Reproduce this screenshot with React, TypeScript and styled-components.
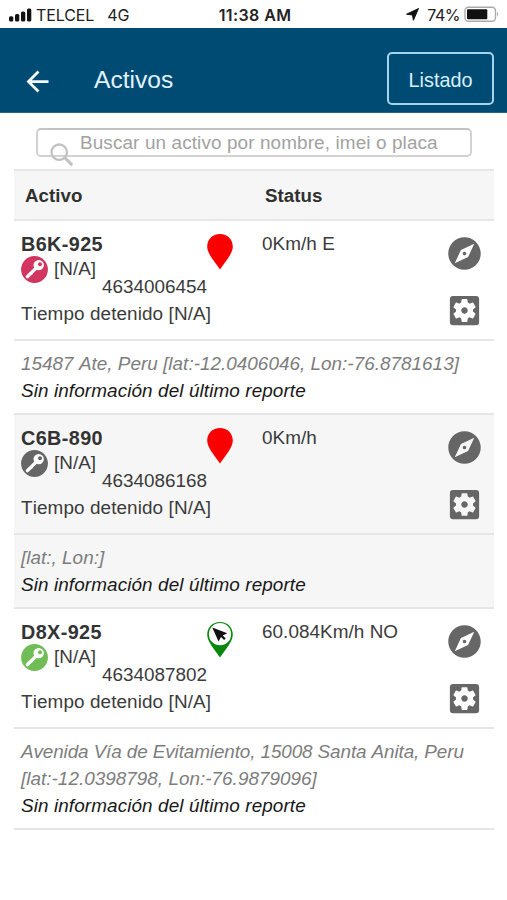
import React from "react";
import styled, { createGlobalStyle } from "styled-components";
import { MdArrowBack, MdExplore, MdSettingsApplications } from "react-icons/md";

const GlobalStyle = createGlobalStyle`
  * { box-sizing: border-box; }
  body { margin: 0; background: #fff; }
`;

const Screen = styled.div`
  width: 507px;
  height: 900px;
  overflow: hidden;
  background: #fff;
  color: #3b3b3b;
  font: 18.9px/27px "Liberation Sans", Arial, sans-serif;
  font-kerning: none;
`;

const StatusBar = styled.div`
  display: grid;
  grid-template-columns: 1fr auto 1fr;
  align-items: center;
  height: 28px;
  padding: 1px 7px 0 8px;
  color: #222;
  font: 16px/20px Inter, sans-serif;
`;

const StatusSide = styled.div<{ $end?: boolean }>`
  display: flex;
  align-items: center;
  justify-content: ${(p) => (p.$end ? "flex-end" : "flex-start")};
`;

const Carrier = styled.span`
  margin: 0 13px 0 4px;
  letter-spacing: -0.1px;
`;

const Network = styled.span`
  letter-spacing: -0.2px;
`;

const Clock = styled.span`
  padding-left: 2px;
  font-weight: 600;
  letter-spacing: 0.4px;
`;

const BatteryLevel = styled.span`
  margin: 0 4px 0 8px;
  letter-spacing: -0.5px;
`;

const AppBar = styled.header`
  display: flex;
  align-items: center;
  height: 85px;
  padding: 22px 13px 0 21px;
  background: #004b74;
  border-bottom: 1px solid #2b6384;
  color: #f4fbff;

  & > svg { flex: none; }
`;

const Title = styled.h1`
  flex: 1;
  margin: -2px 0 0 40px;
  color: #e0f3fe;
  font-size: 24.6px;
  font-weight: 400;
  line-height: 30px;
`;

const ListButton = styled.button`
  width: 107px;
  height: 53px;
  margin-top: -6px;
  padding: 4px 0 0;
  border: 2px solid #a5d3ec;
  border-radius: 5px;
  background: transparent;
  color: #d8f1ff;
  font: 19.8px/24px "Liberation Sans", Arial, sans-serif;
`;

const Content = styled.main`
  padding: 15px 13px 0 14px;
`;

const SearchBox = styled.div`
  position: relative;
  height: 29px;
  margin: 0 22px 12px;
  border: 2px solid #d2d2d2;
  border-top-color: #c2c2c2;
  border-radius: 5px;

  svg { position: absolute; left: 11px; top: 13px; }
`;

const SearchInput = styled.input`
  display: block;
  width: 100%;
  height: 25px;
  padding: 0 0 0 42px;
  border: 0;
  outline: 0;
  background: transparent;
  font: 18.9px/25px "Liberation Sans", Arial, sans-serif;
  letter-spacing: 0.12px;

  &::placeholder { color: #a2a2a2; opacity: 1; }
`;

const HeaderRow = styled.div`
  display: grid;
  grid-template-columns: 240px 1fr;
  height: 50px;
  padding: 11px 11px 0;
  border-top: 2px solid #e6e6e6;
  background: #f6f6f6;
  color: #303030;
  font-weight: 700;
  font-size: 18.7px;
  letter-spacing: 0.05px;
`;

const Record = styled.section<{ $shaded?: boolean }>`
  background: ${(p) => (p.$shaded ? "#f6f6f6" : "#fff")};
`;

const Summary = styled.div`
  display: grid;
  grid-template-columns: 186px 55px 1fr 39px;
  height: 120px;
  padding: 9px 10.5px 0 7px;
  border-top: 2px solid #e6e6e6;
`;

const AssetInfo = styled.div`
  display: flex;
  flex-direction: column;
  white-space: nowrap;
`;

const Plate = styled.strong`
  height: 26px;
  color: #333;
  font-size: 19.8px;
  line-height: 28px;
  letter-spacing: 0.4px;
`;

const KeyLine = styled.div`
  display: flex;
  align-items: center;
  gap: 6px;
  height: 27px;
`;

const KeyLabel = styled.span`
  margin-top: -2px;
`;

const Imei = styled.span`
  height: 21px;
  line-height: 8px;
  text-align: right;
`;

const Stopped = styled.span`
  line-height: 20px;
  letter-spacing: 0.1px;
`;

const PinCell = styled.div`
  padding-top: 3px;
`;

const Speed = styled.div`
  line-height: 28px;
  letter-spacing: 0.05px;
`;

const Actions = styled.div`
  display: flex;
  flex-direction: column;
  gap: 18px;
  padding-top: 4px;
  color: #666;

  svg { display: block; }
`;

const Details = styled.div`
  padding: 9px 7px 10.1px;
  border-top: 2px solid #e6e6e6;
  color: #7d7d7d;
  font-style: italic;
`;

const AddressLine = styled.div<{ $tight?: boolean }>`
  letter-spacing: ${(p) => (p.$tight ? "-0.11px" : "0.02px")};
`;

const Report = styled.div`
  height: 26px;
  color: #181818;
  letter-spacing: 0.1px;
`;

const TableEnd = styled.div`
  height: 2px;
  background: #e6e6e6;
`;

const SignalIcon = () => (
  <svg width="24" height="14" viewBox="0 0 24 14" fill="#111">
    <rect x="1" y="8.2" width="4.3" height="5.2" rx="1.5" />
    <rect x="7" y="6" width="4.3" height="7.4" rx="1.5" />
    <rect x="13" y="3.4" width="4.3" height="10" rx="1.5" />
    <rect x="19" y="0.6" width="4.3" height="12.8" rx="1.5" />
  </svg>
);

const LocationIcon = () => (
  <svg width="13" height="13" viewBox="0 0 13 13">
    <path d="M12.5.5 7.4 12.3 6.5 7 .6 6.2Z" fill="#111" stroke="#111" strokeLinejoin="round" />
  </svg>
);

const BatteryIcon = () => (
  <svg width="36" height="17" viewBox="0 0 36 17">
    <rect x="1" y="1.2" width="30.5" height="14" rx="3.5" fill="none" stroke="#aaa" strokeWidth="1.4" />
    <rect x="3" y="3.2" width="20.3" height="10" rx="1" fill="#111" />
    <path d="M33 6q2 2.2 0 4.5Z" fill="#999" />
  </svg>
);

const SearchIcon = () => (
  <svg width="26" height="26" viewBox="0 0 26 26" fill="none" stroke="#c1c1c1">
    <circle cx="10.2" cy="9.2" r="7.7" strokeWidth="2.3" />
    <path d="m15.8 14.8 7.4 7.3" strokeWidth="3" />
  </svg>
);

const KeyBadge = ({ color }: { color: string }) => (
  <svg width="27" height="27" viewBox="0 0 27 27">
    <circle cx="13.5" cy="13.5" r="13.4" fill={color} />
    <path d="m14.8 12.4-8.4 8.2" stroke="#fff" strokeWidth="3.4" strokeLinecap="round" />
    <path d="m10 17.6 1.2 1M7.4 20l.8.8" stroke="#fff" strokeWidth="1.8" />
    <circle cx="17.7" cy="9.1" r="5.2" fill="#fff" />
    <circle cx="19" cy="8.2" r="2" fill={color} />
  </svg>
);

const PinIcon = ({ moving }: { moving?: boolean }) => (
  <svg width="26" height="38" viewBox="1 0 26 38">
    <path
      d="M14 1C6.6 1 1.2 6.4 1.2 13.5 1.2 21 8.5 28 14 36.5 19.5 28 26.8 21 26.8 13.5 26.8 6.4 21.4 1 14 1Z"
      fill={moving ? "#07860c" : "#fb0000"}
    />
    {moving && (
      <>
        <circle cx="14" cy="13.2" r="11.1" fill="#fff" />
        <path d="m6.3 6.6 15 5.6-4.6 2.2 3 3-1.6 1.6-3.1-3.1-2.5 4.6Z" fill="#111" />
      </>
    )}
  </svg>
);

type AddressText = { text: string; tight?: boolean };

type Asset = {
  plate: string;
  imei: string;
  speed: string;
  keyColor: string;
  moving?: boolean;
  shaded?: boolean;
  address: AddressText[];
};

const assets: Asset[] = [
  {
    plate: "B6K-925",
    imei: "4634006454",
    speed: "0Km/h E",
    keyColor: "#d13560",
    address: [{ text: "15487 Ate, Peru [lat:-12.0406046, Lon:-76.8781613]" }],
  },
  {
    plate: "C6B-890",
    imei: "4634086168",
    speed: "0Km/h",
    keyColor: "#666",
    shaded: true,
    address: [{ text: "[lat:, Lon:]" }],
  },
  {
    plate: "D8X-925",
    imei: "4634087802",
    speed: "60.084Km/h NO",
    keyColor: "#70bd57",
    moving: true,
    address: [
      { text: "Avenida Vía de Evitamiento, 15008 Santa Anita, Peru", tight: true },
      { text: "[lat:-12.0398798, Lon:-76.9879096]" },
    ],
  },
];

const AssetRecord = ({ asset }: { asset: Asset }) => (
  <Record $shaded={asset.shaded}>
    <Summary>
      <AssetInfo>
        <Plate>{asset.plate}</Plate>
        <KeyLine>
          <KeyBadge color={asset.keyColor} />
          <KeyLabel>[N/A]</KeyLabel>
        </KeyLine>
        <Imei>{asset.imei}</Imei>
        <Stopped>Tiempo detenido [N/A]</Stopped>
      </AssetInfo>
      <PinCell>
        <PinIcon moving={asset.moving} />
      </PinCell>
      <Speed>{asset.speed}</Speed>
      <Actions>
        <MdExplore size={39} />
        <MdSettingsApplications size={39} />
      </Actions>
    </Summary>
    <Details>
      {asset.address.map((line) => (
        <AddressLine key={line.text} $tight={line.tight}>
          {line.text}
        </AddressLine>
      ))}
      <Report>Sin información del último reporte</Report>
    </Details>
  </Record>
);

export default function App() {
  return (
    <Screen>
      <GlobalStyle />
      <StatusBar>
        <StatusSide>
          <SignalIcon />
          <Carrier>TELCEL</Carrier>
          <Network>4G</Network>
        </StatusSide>
        <Clock>11:38 AM</Clock>
        <StatusSide $end>
          <LocationIcon />
          <BatteryLevel>74%</BatteryLevel>
          <BatteryIcon />
        </StatusSide>
      </StatusBar>
      <AppBar>
        <MdArrowBack size={33} />
        <Title>Activos</Title>
        <ListButton>Listado</ListButton>
      </AppBar>
      <Content>
        <SearchBox>
          <SearchInput placeholder="Buscar un activo por nombre, imei o placa" />
          <SearchIcon />
        </SearchBox>
        <HeaderRow>
          <span>Activo</span>
          <span>Status</span>
        </HeaderRow>
        {assets.map((asset) => (
          <AssetRecord key={asset.plate} asset={asset} />
        ))}
        <TableEnd />
      </Content>
    </Screen>
  );
}
